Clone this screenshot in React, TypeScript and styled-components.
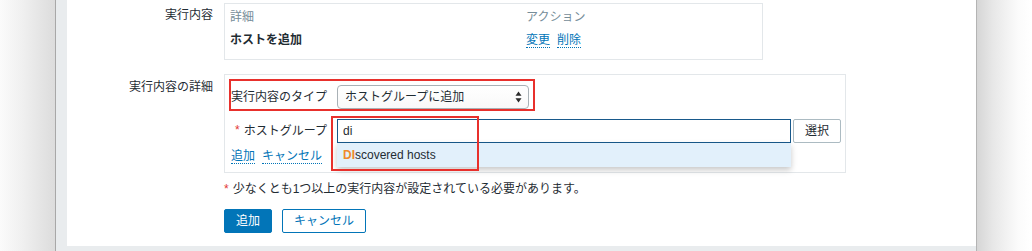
import React from "react";
import styled, { createGlobalStyle } from "styled-components";

const Global = createGlobalStyle`
  html, body { margin: 0; padding: 0; background: #ffffff; }
  body {
    font-family: "Liberation Sans", "Noto Sans CJK JP", sans-serif;
    font-size: 12px;
    line-height: 14px;
    color: #1f2c33;
  }
  * { box-sizing: border-box; }
`;

const Screen = styled.div`
  display: flex;
  width: 1032px;
  height: 251px;
  overflow: hidden;
`;

const LeftShade = styled.div`
  width: 56px;
  flex: none;
  background: linear-gradient(to right, #fbfbfb 0%, #f0f0f0 40%, #dcdcdc 100%);
  border-right: 1px solid #a8a8a8;
`;

const RightShade = styled.div`
  flex: 1;
  background: linear-gradient(to right, #d6d6d6 0%, #e8e8e8 30%, #fbfbfb 75%, #ffffff 100%);
  border-left: 1px solid #b4b4b4;
`;

const Page = styled.div`
  width: 920px;
  flex: none;
  background: #e9ecee;
  padding: 0 0 5px 11px;
  display: flex;
`;

const Panel = styled.div`
  width: 909px;
  height: 246px;
  background: #ffffff;
  padding-top: 3px;
  display: grid;
  grid-template-columns: 146px 1fr;
  column-gap: 11px;
  align-content: start;
`;

const Label = styled.div<{ $top?: number }>`
  text-align: right;
  padding-top: ${(p) => p.$top ?? 5}px;
  white-space: nowrap;
`;

const Box = styled.div<{ $w: number; $h?: number; $mt?: number }>`
  width: ${(p) => p.$w}px;
  ${(p) => (p.$h ? `height: ${p.$h}px;` : "")}
  margin-top: ${(p) => p.$mt ?? 0}px;
  border: 1px solid #e3e7ea;
`;

const Table = styled.div`
  display: grid;
  grid-template-columns: 296px 1fr;
  padding: 0 5px;
`;

const HeadCell = styled.div`
  color: #768d99;
  height: 24px;
  padding-top: 6px;
  white-space: nowrap;
`;

const BodyCell = styled.div<{ $bold?: boolean }>`
  padding-top: 5px;
  font-weight: ${(p) => (p.$bold ? 700 : 400)};
  display: flex;
  gap: 7px;
  white-space: nowrap;
`;

const Link = styled.span`
  color: #0275b8;
  border-bottom: 1px dotted #0275b8;
  line-height: 14px;
  display: inline-block;
`;

const Spacer = styled.div``;

const Inner = styled.div`
  padding: 10px 5px 8px 5px;
  display: flex;
  flex-direction: column;
`;

const FormRow = styled.div<{ $mb?: number }>`
  display: grid;
  grid-template-columns: 97px auto;
  column-gap: 10px;
  align-items: center;
  justify-content: start;
  margin-bottom: ${(p) => p.$mb ?? 0}px;
  position: relative;
`;

const RowLabel = styled.div<{ $required?: boolean }>`
  text-align: right;
  white-space: nowrap;
  ${(p) =>
    p.$required
      ? `&::before { content: "*"; color: #e33734; margin-right: 4px; position: relative; top: -1px; }`
      : ""}
`;

const Annot = styled.div<{ $l: number; $t: number; $w: number; $h: number }>`
  position: absolute;
  left: ${(p) => p.$l}px;
  top: ${(p) => p.$t}px;
  width: ${(p) => p.$w}px;
  height: ${(p) => p.$h}px;
  border: 2.5px solid #e8302c;
  pointer-events: none;
  z-index: 5;
`;

const Select = styled.div`
  width: 192px;
  height: 24px;
  border: 1px solid #a9b1b6;
  border-radius: 4px;
  background: linear-gradient(#ffffff, #f9f9f9);
  display: flex;
  align-items: center;
  justify-content: space-between;
  padding: 0 6px 0 7px;
  white-space: nowrap;
`;

const FieldWrap = styled.div`
  display: flex;
  gap: 2px;
  align-items: center;
`;

const InputBox = styled.div`
  position: relative;
  width: 454px;
  height: 24px;
  border: 1px solid #18598b;
  background: #fff;
  padding: 0 5px;
  display: flex;
  align-items: center;
`;

const Dropdown = styled.div`
  position: absolute;
  left: -1px;
  top: 23px;
  width: 454px;
  height: 24px;
  background: #e2f0fb;
  box-shadow: 0 3px 6px rgba(0, 0, 0, 0.22);
  display: flex;
  align-items: center;
  padding-left: 6px;
  z-index: 3;
  font-size: 12px;
`;

const Match = styled.b`
  color: #f08a2c;
  font-weight: 700;
`;

const SmallButton = styled.div`
  width: 48px;
  height: 24px;
  border: 1px solid #acbbc2;
  border-radius: 2px;
  background: #fff;
  display: flex;
  align-items: center;
  justify-content: center;
`;

const LinksRow = styled.div`
  display: flex;
  gap: 7px;
  margin-top: 6px;
  padding-left: 1px;
  position: relative;
  z-index: 1;
`;

const Note = styled.div`
  grid-column: 2;
  margin-top: 9px;
  white-space: nowrap;
  &::before {
    content: "*";
    color: #e33734;
    margin-right: 4px;
  }
`;

const Buttons = styled.div`
  grid-column: 2;
  display: flex;
  gap: 10px;
  margin-top: 13px;
`;

const Button = styled.div<{ $primary?: boolean; $w: number }>`
  width: ${(p) => p.$w}px;
  height: 24px;
  border-radius: 2px;
  border: 1px solid #0275b8;
  background: ${(p) => (p.$primary ? "#0275b8" : "#ffffff")};
  color: ${(p) => (p.$primary ? "#ffffff" : "#0275b8")};
  display: flex;
  align-items: center;
  justify-content: center;
`;

const RelCol = styled.div`
  position: relative;
`;

const Arrows = () => (
  <svg width="7" height="12" viewBox="0 0 7 12">
    <path d="M3.5 0.5 L6.5 4.8 L0.5 4.8 Z" fill="#2b2b2b" />
    <path d="M3.5 11.5 L6.5 7.2 L0.5 7.2 Z" fill="#2b2b2b" />
  </svg>
);

export default function App() {
  return (
    <>
      <Global />
      <Screen>
        <LeftShade />
        <Page>
          <Panel>
            <Label $top={5}>実行内容</Label>
            <Box $w={539} $h={57}>
              <Table>
                <HeadCell>詳細</HeadCell>
                <HeadCell>アクション</HeadCell>
                <BodyCell $bold>ホストを追加</BodyCell>
                <BodyCell>
                  <Link>変更</Link>
                  <Link>削除</Link>
                </BodyCell>
              </Table>
            </Box>

            <Label $top={20}>実行内容の詳細</Label>
            <Box $w={622} $mt={14}>
              <Inner>
                <FormRow $mb={10}>
                  <Annot $l={-1} $t={-6} $w={306} $h={32} />
                  <RowLabel>実行内容のタイプ</RowLabel>
                  <Select>
                    <span>ホストグループに追加</span>
                    <Arrows />
                  </Select>
                </FormRow>
                <FormRow>
                  <RowLabel $required>ホストグループ</RowLabel>
                  <RelCol>
                    <Annot $l={-6} $t={-3} $w={148} $h={55} />
                    <FieldWrap>
                      <InputBox>
                        di
                        <Dropdown>
                          <span>
                            <Match>DI</Match>scovered hosts
                          </span>
                        </Dropdown>
                      </InputBox>
                      <SmallButton>選択</SmallButton>
                    </FieldWrap>
                  </RelCol>
                </FormRow>
                <LinksRow>
                  <Link>追加</Link>
                  <Link>キャンセル</Link>
                </LinksRow>
                <Spacer />
              </Inner>
            </Box>

            <Note>少なくとも1つ以上の実行内容が設定されている必要があります。</Note>
            <Buttons>
              <Button $primary $w={48}>追加</Button>
              <Button $w={84}>キャンセル</Button>
            </Buttons>
          </Panel>
        </Page>
        <RightShade />
      </Screen>
    </>
  );
}
